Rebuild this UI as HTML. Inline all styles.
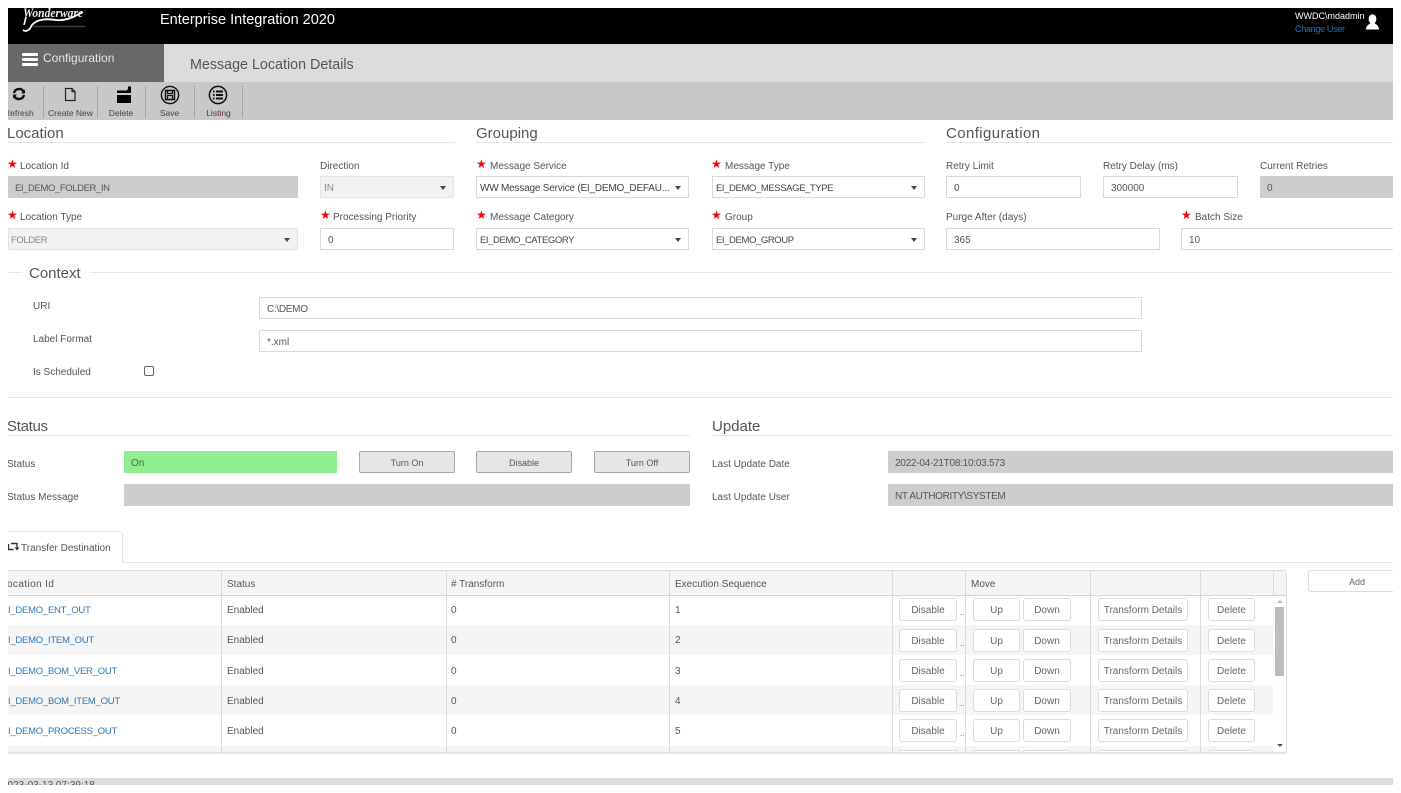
<!DOCTYPE html>
<html><head><meta charset="utf-8"><title>Message Location Details</title>
<style>
html,body{margin:0;padding:0;background:#fff;width:1401px;height:793px;overflow:hidden}
#p{position:absolute;left:0;top:0;width:1401px;height:793px;overflow:hidden;clip-path:inset(8px 8px 8px 8px);font-family:"Liberation Sans",sans-serif;font-size:10px;color:#555}
#p div,#p a,#p svg{position:absolute}
.r{box-sizing:border-box}
.t{white-space:nowrap;line-height:14px;height:14px;margin-top:4px}
.h{font-size:15px;line-height:20px;height:20px;white-space:nowrap;color:#555}
.ln{height:1px;background:#e6e6e6}
.st{color:#f00;font-size:12px;line-height:14px;height:14px}
.i{box-sizing:border-box;height:22px;background:#fff;border:1px solid #dadada;line-height:24px;padding-left:7px;white-space:nowrap;overflow:hidden;color:#555}
.g{background:#cdcdcd;border:0;line-height:26px}
.s{padding-left:3px;color:#444}
.dis{background:#f2f2f2;border:1px solid #e4e4e4;color:#888}
.ar{width:0;height:0;border-left:3px solid transparent;border-right:3px solid transparent;border-top:4px solid #444;top:9px;right:7px}
.u{font-size:9.5px;letter-spacing:-.4px}
.b{box-sizing:border-box;height:22px;background:#e6e6e6;border:1px solid #a8a8a8;border-radius:2px;text-align:center;line-height:23px;font-size:9px;color:#555}
.c{box-sizing:border-box;height:23px;background:#fff;border:1px solid #dcdcdc;border-radius:3px;text-align:center;line-height:23px;font-size:10px;color:#666}
.lk{color:#2f77b5;white-space:nowrap;line-height:14px;height:14px;margin-top:4px;font-size:9.5px;letter-spacing:-.25px}
.tl{white-space:nowrap;line-height:12px;height:12px;font-size:8.5px;color:#444;text-align:center}
.sep{width:1px;top:86px;height:32px;background:#a6a6a6}
.vl{width:1px;background:#dcdcdc;top:570px;height:183px}
.row{left:8px;width:1265px;height:30px;background:#f5f5f5}
</style></head><body>
<div id="p">
<!-- header -->
<div style="left:8px;top:8px;width:1385px;height:36px;background:#000"></div>
<svg style="left:20px;top:6px" width="70" height="28" viewBox="0 0 70 28"><text x="3" y="11" font-family="Liberation Serif,serif" font-style="italic" font-weight="bold" font-size="13" fill="#eee" textLength="60" lengthAdjust="spacingAndGlyphs">Wonderware</text><path d="M3 24C6 26 9 25 12 19C18 12 28 13 36 14C46 15 54 11 63 6" fill="none" stroke="#fff" stroke-width="1.8"/><path d="M6 11L4 19" stroke="#fff" stroke-width="1.6"/><path d="M12 20.5H65" stroke="#3c3c3c" stroke-width="1.4"/></svg>
<div class="t" style="left:160px;top:8px;font-size:14.5px;line-height:16px;height:16px;color:#fff">Enterprise Integration 2020</div>
<div class="t" style="left:1295px;top:5px;color:#fff;font-size:9px">WWDC\mdadmin</div>
<div class="t" style="left:1295px;top:18px;color:#2a6fb5;font-size:9px;letter-spacing:-.3px">Change User</div>
<svg style="left:1365px;top:14px" width="15" height="16" viewBox="0 0 15 16"><ellipse cx="7.5" cy="5" rx="3.9" ry="4.8" fill="#fff"/><path d="M1 15.5C1 11.5 4 10.5 5.5 9H9.5C11 10.5 14 11.5 14 15.5Z" fill="#fff"/></svg>
<!-- nav -->
<div style="left:8px;top:44px;width:156px;height:38px;background:#686868"></div>
<div style="left:164px;top:44px;width:1229px;height:38px;background:#dcdcdc"></div>
<div style="left:22px;top:53px;width:16px;height:3px;background:#fff;border-radius:1px"></div>
<div style="left:22px;top:58px;width:16px;height:3px;background:#fff;border-radius:1px"></div>
<div style="left:22px;top:63px;width:16px;height:3px;background:#fff;border-radius:1px"></div>
<div class="t" style="left:43px;top:47px;color:#e6e6e6;font-size:12px">Configuration</div>
<div class="t" style="left:190px;top:53px;height:16px;line-height:16px;font-size:14.3px;color:#555">Message Location Details</div>
<!-- toolbar -->
<div style="left:8px;top:82px;width:1385px;height:38px;background:#c8c8c8"></div>
<svg style="left:11px;top:86px" width="16" height="16" viewBox="0 0 16 16"><path d="M3 7A5.2 5.2 0 0 1 12.6 5.6M13 9A5.2 5.2 0 0 1 3.4 10.4" fill="none" stroke="#111" stroke-width="2.4"/><path d="M14 3.5V7.5H10ZM2 12.5V8.5H6Z" fill="#111"/></svg>
<svg style="left:64px;top:87px" width="13" height="15" viewBox="0 0 13 15"><path d="M1.5 1.5H8L11 4.6V13.5H1.5ZM8 1.5V4.6H11" fill="none" stroke="#222" stroke-width="1.2"/></svg>
<svg style="left:116px;top:86px" width="16" height="18" viewBox="0 0 16 18"><path d="M1 9H15V17H1ZM1 4.5H11V7H1ZM11 3.5H12V0.5H15V7H11Z" fill="#000"/></svg>
<svg style="left:160px;top:85px" width="20" height="20" viewBox="0 0 20 20"><circle cx="10" cy="10" r="8.6" fill="none" stroke="#111" stroke-width="1.4"/><path d="M5.5 5.5H14.5V14.5H5.5Z" fill="none" stroke="#111" stroke-width="1.4"/><path d="M7.5 5.5H12.5V8.5H7.5ZM7.5 10.5H12.5V14.5H7.5Z" fill="none" stroke="#111" stroke-width="1.2"/></svg>
<svg style="left:208px;top:85px" width="20" height="20" viewBox="0 0 20 20"><circle cx="10" cy="10" r="8.6" fill="none" stroke="#111" stroke-width="1.5"/><path d="M8 6.5H15M8 10H15M8 13.5H15M5 6.5H6.5M5 10H6.5M5 13.5H6.5" stroke="#111" stroke-width="1.9"/></svg>
<div class="tl" style="left:8px;top:107px;width:26px;text-align:left;overflow:hidden"><span style="margin-left:-4px">Refresh</span></div>
<div class="tl" style="left:45px;top:107px;width:51px">Create New</div>
<div class="tl" style="left:98px;top:107px;width:46px">Delete</div>
<div class="tl" style="left:146px;top:107px;width:47px">Save</div>
<div class="tl" style="left:195px;top:107px;width:47px;color:#5a3040">Listing</div>
<div class="sep" style="left:43px"></div><div class="sep" style="left:97px"></div><div class="sep" style="left:145px"></div><div class="sep" style="left:194px"></div><div class="sep" style="left:242px"></div>
<!-- section titles -->
<div class="h" style="left:7px;top:124px">Location</div>
<div class="h" style="left:476px;top:124px">Grouping</div>
<div class="h" style="left:946px;top:124px;letter-spacing:.4px">Configuration</div>
<div class="ln" style="left:8px;top:142px;width:447px"></div>
<div class="ln" style="left:476px;top:142px;width:449px"></div>
<div class="ln" style="left:946px;top:142px;width:447px"></div>
<!-- row 1 -->
<div class="st" style="left:7px;top:157px">★</div><div class="t" style="left:20px;top:156px">Location Id</div>
<div class="t" style="left:320px;top:156px">Direction</div>
<div class="st" style="left:476px;top:157px">★</div><div class="t" style="left:490px;top:156px">Message Service</div>
<div class="st" style="left:711px;top:157px">★</div><div class="t" style="left:725px;top:156px">Message Type</div>
<div class="t" style="left:946px;top:156px">Retry Limit</div>
<div class="t" style="left:1103px;top:156px">Retry Delay (ms)</div>
<div class="t" style="left:1260px;top:156px">Current Retries</div>
<div class="i g u" style="left:8px;top:176px;width:290px">EI_DEMO_FOLDER_IN</div>
<div class="i s dis" style="left:320px;top:176px;width:134px">IN<div class="ar"></div></div>
<div class="i s" style="left:476px;top:176px;width:213px;letter-spacing:-.2px">WW Message Service (EI_DEMO_DEFAU...<div class="ar"></div></div>
<div class="i s u" style="left:712px;top:176px;width:213px">EI_DEMO_MESSAGE_TYPE<div class="ar"></div></div>
<div class="i" style="left:946px;top:176px;width:135px">0</div>
<div class="i" style="left:1103px;top:176px;width:135px">300000</div>
<div class="i g" style="left:1260px;top:176px;width:133px">0</div>
<!-- row 2 -->
<div class="st" style="left:7px;top:208px">★</div><div class="t" style="left:20px;top:207px">Location Type</div>
<div class="st" style="left:320px;top:208px">★</div><div class="t" style="left:333px;top:207px">Processing Priority</div>
<div class="st" style="left:476px;top:208px">★</div><div class="t" style="left:490px;top:207px">Message Category</div>
<div class="st" style="left:711px;top:208px">★</div><div class="t" style="left:725px;top:207px">Group</div>
<div class="t" style="left:946px;top:207px">Purge After (days)</div>
<div class="st" style="left:1181px;top:208px">★</div><div class="t" style="left:1195px;top:207px">Batch Size</div>
<div class="i s dis u" style="left:8px;top:228px;width:290px;padding-left:2px">FOLDER<div class="ar"></div></div>
<div class="i" style="left:320px;top:228px;width:134px">0</div>
<div class="i s u" style="left:476px;top:228px;width:213px">EI_DEMO_CATEGORY<div class="ar"></div></div>
<div class="i s u" style="left:712px;top:228px;width:213px">EI_DEMO_GROUP<div class="ar"></div></div>
<div class="i" style="left:946px;top:228px;width:214px">365</div>
<div class="i" style="left:1181px;top:228px;width:230px">10</div>
<!-- context -->
<div class="ln" style="left:8px;top:272px;width:14px"></div>
<div class="ln" style="left:90px;top:272px;width:1303px"></div>
<div class="h" style="left:29px;top:264px">Context</div>
<div class="t" style="left:33px;top:296px">URI</div>
<div class="t" style="left:33px;top:329px">Label Format</div>
<div class="t" style="left:33px;top:362px">Is Scheduled</div>
<div class="i" style="left:259px;top:297px;width:883px;letter-spacing:-.3px">C:\DEMO</div>
<div class="i" style="left:259px;top:330px;width:883px">*.xml</div>
<div class="r" style="left:144px;top:366px;width:10px;height:10px;border:1px solid #666;border-radius:2px;background:#fff"></div>
<div class="ln" style="left:8px;top:397px;width:1385px"></div>
<!-- status -->
<div class="h" style="left:7px;top:417px;letter-spacing:-.3px">Status</div>
<div class="h" style="left:712px;top:417px">Update</div>
<div class="ln" style="left:8px;top:435px;width:682px"></div>
<div class="ln" style="left:712px;top:435px;width:681px"></div>
<div class="t" style="left:7px;top:454px">Status</div>
<div class="t" style="left:7px;top:487px">Status Message</div>
<div class="i" style="left:124px;top:451px;width:213px;background:#90ee90;border:0;line-height:26px;color:#4d6b4d">On</div>
<div class="b" style="left:359px;top:451px;width:96px">Turn On</div>
<div class="b" style="left:476px;top:451px;width:96px">Disable</div>
<div class="b" style="left:594px;top:451px;width:96px">Turn Off</div>
<div class="i g" style="left:124px;top:484px;width:566px"></div>
<div class="t" style="left:712px;top:454px">Last Update Date</div>
<div class="t" style="left:712px;top:487px">Last Update User</div>
<div class="i g" style="left:888px;top:451px;width:505px;letter-spacing:-.25px">2022-04-21T08:10:03.573</div>
<div class="i g" style="left:888px;top:484px;width:505px;letter-spacing:-.35px">NT AUTHORITY\SYSTEM</div>
<!-- tab -->
<div class="ln" style="left:8px;top:562px;width:1385px"></div>
<div class="r" style="left:-2px;top:531px;width:125px;height:32px;background:#fff;border:1px solid #e4e4e4;border-bottom:0;border-radius:3px 3px 0 0"></div>
<svg style="left:7px;top:542px" width="13" height="9" viewBox="0 0 13 9"><path d="M1.5 2V7.5H6.5M4 1.5H10V6" fill="none" stroke="#333" stroke-width="1.4"/><path d="M7.5 5.5H12.5L10 8.5Z" fill="#333"/></svg>
<div class="t" style="left:21px;top:538px">Transfer Destination</div>
<!-- table -->
<div class="r" style="left:-2px;top:570px;width:1289px;height:183px;border:1px solid #dadada;border-radius:3px"></div>
<div style="left:8px;top:571px;width:1278px;height:24px;background:#f4f4f4;border-bottom:1px solid #d4d4d4"></div>
<div class="row" style="top:625px"></div><div class="row" style="top:685px"></div><div class="row" style="top:746px;height:6px"></div>
<div class="t" style="left:8px;top:574px;width:100px;overflow:hidden"><span style="margin-left:-7px;letter-spacing:.4px">Location Id</span></div>
<div class="t" style="left:227px;top:574px">Status</div>
<div class="t" style="left:451px;top:574px"># Transform</div>
<div class="t" style="left:675px;top:574px">Execution Sequence</div>
<div class="t" style="left:971px;top:574px">Move</div>
<div class="lk" style="left:8px;top:600px">I_DEMO_ENT_OUT</div><div class="t" style="left:227px;top:600px">Enabled</div><div class="t" style="left:451px;top:600px">0</div><div class="t" style="left:675px;top:600px">1</div>
<div class="lk" style="left:8px;top:630px">I_DEMO_ITEM_OUT</div><div class="t" style="left:227px;top:630px">Enabled</div><div class="t" style="left:451px;top:630px">0</div><div class="t" style="left:675px;top:630px">2</div>
<div class="lk" style="left:8px;top:661px">I_DEMO_BOM_VER_OUT</div><div class="t" style="left:227px;top:661px">Enabled</div><div class="t" style="left:451px;top:661px">0</div><div class="t" style="left:675px;top:661px">3</div>
<div class="lk" style="left:8px;top:691px">I_DEMO_BOM_ITEM_OUT</div><div class="t" style="left:227px;top:691px">Enabled</div><div class="t" style="left:451px;top:691px">0</div><div class="t" style="left:675px;top:691px">4</div>
<div class="lk" style="left:8px;top:721px">I_DEMO_PROCESS_OUT</div><div class="t" style="left:227px;top:721px">Enabled</div><div class="t" style="left:451px;top:721px">0</div><div class="t" style="left:675px;top:721px">5</div>
<!-- table buttons -->
<div class="c" style="left:899px;top:598px;width:58px">Disable</div><div class="t" style="left:960px;top:602px;font-size:8px">..</div><div class="c" style="left:973px;top:598px;width:47px">Up</div><div class="c" style="left:1023px;top:598px;width:48px">Down</div><div class="c" style="left:1098px;top:598px;width:90px">Transform Details</div><div class="c" style="left:1208px;top:598px;width:47px">Delete</div>
<div class="c" style="left:899px;top:629px;width:58px">Disable</div><div class="t" style="left:960px;top:633px;font-size:8px">..</div><div class="c" style="left:973px;top:629px;width:47px">Up</div><div class="c" style="left:1023px;top:629px;width:48px">Down</div><div class="c" style="left:1098px;top:629px;width:90px">Transform Details</div><div class="c" style="left:1208px;top:629px;width:47px">Delete</div>
<div class="c" style="left:899px;top:659px;width:58px">Disable</div><div class="t" style="left:960px;top:663px;font-size:8px">..</div><div class="c" style="left:973px;top:659px;width:47px">Up</div><div class="c" style="left:1023px;top:659px;width:48px">Down</div><div class="c" style="left:1098px;top:659px;width:90px">Transform Details</div><div class="c" style="left:1208px;top:659px;width:47px">Delete</div>
<div class="c" style="left:899px;top:689px;width:58px">Disable</div><div class="t" style="left:960px;top:693px;font-size:8px">..</div><div class="c" style="left:973px;top:689px;width:47px">Up</div><div class="c" style="left:1023px;top:689px;width:48px">Down</div><div class="c" style="left:1098px;top:689px;width:90px">Transform Details</div><div class="c" style="left:1208px;top:689px;width:47px">Delete</div>
<div class="c" style="left:899px;top:719px;width:58px">Disable</div><div class="t" style="left:960px;top:723px;font-size:8px">..</div><div class="c" style="left:973px;top:719px;width:47px">Up</div><div class="c" style="left:1023px;top:719px;width:48px">Down</div><div class="c" style="left:1098px;top:719px;width:90px">Transform Details</div><div class="c" style="left:1208px;top:719px;width:47px">Delete</div>
<div class="c" style="left:899px;top:750px;width:58px;height:2px;border-bottom:0;border-radius:3px 3px 0 0"></div><div class="c" style="left:973px;top:750px;width:47px;height:2px;border-bottom:0;border-radius:3px 3px 0 0"></div><div class="c" style="left:1023px;top:750px;width:48px;height:2px;border-bottom:0;border-radius:3px 3px 0 0"></div><div class="c" style="left:1098px;top:750px;width:90px;height:2px;border-bottom:0;border-radius:3px 3px 0 0"></div><div class="c" style="left:1208px;top:750px;width:47px;height:2px;border-bottom:0;border-radius:3px 3px 0 0"></div>
<div class="ln" style="left:8px;top:752px;width:1279px;height:2px;background:#e4e4e4"></div>
<div class="vl" style="left:221px"></div><div class="vl" style="left:446px"></div><div class="vl" style="left:669px"></div><div class="vl" style="left:892px"></div><div class="vl" style="left:965px"></div><div class="vl" style="left:1090px"></div><div class="vl" style="left:1200px"></div>
<div class="vl" style="left:1273px;height:25px"></div>
<!-- scrollbar -->
<div style="left:1275px;top:607px;width:9px;height:69px;background:#bdbdbd"></div>
<div style="left:1277px;top:600px;width:0;height:0;border-left:3px solid transparent;border-right:3px solid transparent;border-bottom:3px solid #bbb"></div>
<div style="left:1277px;top:744px;width:0;height:0;border-left:3px solid transparent;border-right:3px solid transparent;border-top:3px solid #555"></div>
<!-- add -->
<div class="c" style="left:1308px;top:570px;width:110px;height:22px;line-height:22px;font-size:9px;text-align:left;padding-left:40px">Add</div>
<!-- footer -->
<div style="left:8px;top:778px;width:1385px;height:7px;background:#dcdcdc"></div>
<div class="t" style="left:2px;top:775px;color:#555">2023-03-13 07:39:18</div>
</div>
</body></html>
